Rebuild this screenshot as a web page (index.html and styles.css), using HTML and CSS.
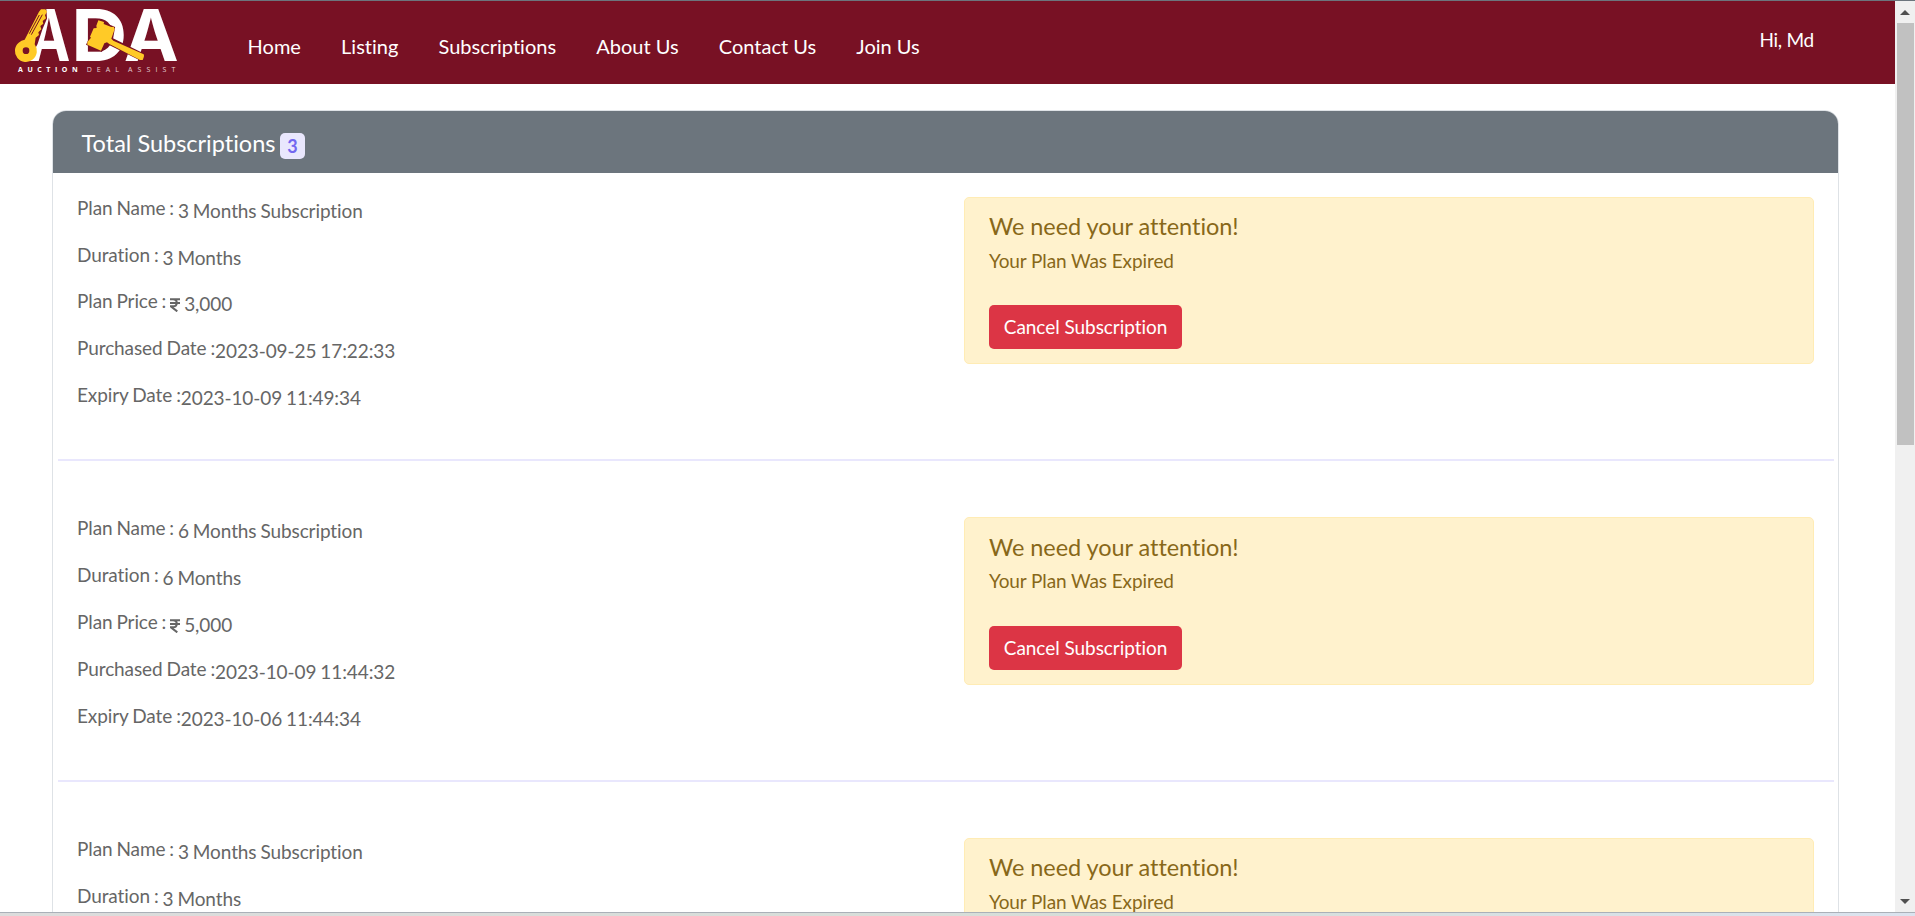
FILE: index.html
```
<!DOCTYPE html>
<html lang="en">
<head>
<meta charset="utf-8">
<title>Subscriptions</title>
<link rel="stylesheet" href="styles.css">
</head>
<body>
<div class="window">
  <div class="page">
    <header class="navbar">
      <svg class="logo" viewBox="0 3 540 249" role="img" aria-label="Auction Deal Assist">
        <g class="logo-letters">
          <text x="84" y="183" textLength="127" lengthAdjust="spacingAndGlyphs">A</text>
          <text x="214" y="183" textLength="168" lengthAdjust="spacingAndGlyphs">D</text>
          <text x="371" y="183" textLength="165" lengthAdjust="spacingAndGlyphs">A</text>
        </g>
        <path class="knockout" d="M76 120 L122 27 L136 27 L138 55 L124 88 L110 131 L78 190 L40 150Z"/>
        <path class="knockout" d="M295 63 L342 83 L336 117 L432 164 L424 180 L324 130 L304 152 L262 133Z"/>
        <g class="gold">
          <path fill-rule="evenodd" d="M74 119 L117 35 L123 28 L136 28 L141 35 L135 46 L138 55 L128 63 L130 71 L121 78 L124 88 L115 97 L117 105 L107 113 L104 133 A33 33 0 1 1 56 128 Q64 120 74 119Z M78 142 A10 10 0 1 0 78 162 A10 10 0 1 0 78 142Z"/>
          <path d="M295 61 L312 66 L311 72 L334 81 L341 80 L344 87 L334 116 L340 122 L431 163 Q434 168 428 180 L420 180 L328 132 L321 127 L313 130 L303 152 L262 134 L262 126 L273 113 L270 110 L281 85 L290 84 L289 77Z"/>
        </g>
        <path class="slot" d="M127 44 L94 104 M118 45 L88 101"/>
        <g class="tagline">
          <text class="tagline-strong" x="54" y="215" textLength="179">AUCTION</text>
          <text x="260" y="215" textLength="97">DEAL</text>
          <text x="384" y="215" textLength="142">ASSIST</text>
        </g>
      </svg>
      <nav class="links">
        <a>Home</a><a>Listing</a><a>Subscriptions</a><a>About Us</a><a>Contact Us</a><a>Join Us</a>
      </nav>
      <span class="greeting">Hi, Md</span>
    </header>
    <main class="card">
      <div class="card-header"><h1>Total Subscriptions</h1><span class="badge">3</span></div>
      <section class="plan">
        <dl class="details">
          <div><dt>Plan Name :</dt><dd class="spaced">3 Months Subscription</dd></div>
          <div><dt>Duration :</dt><dd class="spaced">3 Months</dd></div>
          <div><dt>Plan Price :</dt><dd class="spaced"><svg class="rupee" viewBox="0 0 10 14"><path d="M0 1.2H10M0 5H10M0 1.2H3C8 1.2 8 8.3 3 8.3H.8L7.3 13.4"/></svg>3,000</dd></div>
          <div><dt>Purchased Date :</dt><dd>2023-09-25 17:22:33</dd></div>
          <div><dt>Expiry Date :</dt><dd>2023-10-09 11:49:34</dd></div>
        </dl>
        <div class="alert"><h2>We need your attention!</h2><p>Your Plan Was Expired</p><button>Cancel Subscription</button></div>
      </section>
      <section class="plan">
        <dl class="details">
          <div><dt>Plan Name :</dt><dd class="spaced">6 Months Subscription</dd></div>
          <div><dt>Duration :</dt><dd class="spaced">6 Months</dd></div>
          <div><dt>Plan Price :</dt><dd class="spaced"><svg class="rupee" viewBox="0 0 10 14"><path d="M0 1.2H10M0 5H10M0 1.2H3C8 1.2 8 8.3 3 8.3H.8L7.3 13.4"/></svg>5,000</dd></div>
          <div><dt>Purchased Date :</dt><dd>2023-10-09 11:44:32</dd></div>
          <div><dt>Expiry Date :</dt><dd>2023-10-06 11:44:34</dd></div>
        </dl>
        <div class="alert tall"><h2>We need your attention!</h2><p>Your Plan Was Expired</p><button>Cancel Subscription</button></div>
      </section>
      <section class="plan">
        <dl class="details">
          <div><dt>Plan Name :</dt><dd class="spaced">3 Months Subscription</dd></div>
          <div><dt>Duration :</dt><dd class="spaced">3 Months</dd></div>
        </dl>
        <div class="alert"><h2>We need your attention!</h2><p>Your Plan Was Expired</p></div>
      </section>
    </main>
  </div>
  <div class="scrollbar"><i class="arrow-up"></i><i class="thumb"></i><i class="arrow-down"></i></div>
</div>
<div class="taskbar"></div>
</body>
</html>
```
FILE: styles.css
```
* { box-sizing: border-box; }
body { margin: 0; height: 916px; overflow: hidden; background: #fff; color: #666; font: 19px/28px Lato, sans-serif; font-variant-ligatures: none; display: flex; flex-direction: column; border-top: 1px solid #6c757d; }
h1, h2, p, dl, dd { margin: 0; font-weight: 400; }
.window { flex: 1; min-height: 0; display: flex; overflow: hidden; }
.page { flex: 1; overflow: hidden; }
.navbar { height: 83px; background: #781124; color: #fff; display: flex; align-items: flex-start; }
.logo { width: 180px; height: 83px; overflow: visible; }
.logo-letters { fill: #fff; font: 700 214px Inter, sans-serif; }
.knockout { fill: #781124; stroke: #781124; stroke-width: 6; }
.gold { fill: #ffca27; }
.slot { fill: none; stroke: #781124; stroke-width: 3; }
.tagline { fill: #e4cdd1; font: 400 21px "Open Sans", sans-serif; }
.tagline-strong { fill: #fff; font-weight: 700; }
.links { display: flex; gap: 40.2px; padding: 31px 0 0 67.6px; font-size: 20px; }
.greeting { margin: 25px 81px 0 auto; letter-spacing: -.25px; }
.card { margin: 26px 56px 0 52px; border: 1px solid #dee2e6; border-radius: 14px 14px 0 0; overflow: hidden; height: 1000px; }
.card-header { height: 62px; background: #6c757d; color: #fff; display: flex; align-items: flex-start; padding: 16px 0 0 28.6px; gap: 5px; }
h1 { font-size: 23.5px; line-height: 32px; width: 193.4px; white-space: nowrap; }
.badge { margin-top: 6px; width: 25px; height: 26px; border-radius: 5px; background: #e9e7fd; color: #7367f0; font-size: 18px; font-weight: 700; line-height: 26px; text-align: center; }
.plan { margin: 0 4px 0 5px; height: 321px; display: grid; grid-template-columns: 1fr 850px; padding: 56px 20px 0 19px; border-top: 2px solid #e9e7fd; }
.plan:first-of-type { padding-top: 24px; border-top: 0; height: 286px; }
.details { display: flex; flex-direction: column; gap: 18.9px; margin-top: -3px; letter-spacing: -.1px; word-spacing: -.8px; }
.plan:first-of-type .details { gap: 18.7px; }
.details div { display: flex; height: 28px; white-space: nowrap; }
.details dd { padding-top: 3px; }
.spaced { margin-left: 4px; }
.rupee { width: 10px; height: 14px; margin-right: 4px; vertical-align: -1px; fill: none; stroke: #666; stroke-width: 2; }
.alert { height: 167px; border: 1px solid #ffecb5; border-radius: 5px; background: #fff2cd; color: #886819; padding: 12px 24px; }
.alert h2 { font-size: 23.5px; line-height: 32px; letter-spacing: -.05px; }
.alert p { line-height: 28px; margin-top: 5px; letter-spacing: -.1px; }
.alert button { display: block; margin-top: 30px; width: 193px; height: 44px; padding: 0; border: 0; border-radius: 5px; background: #dc3545; color: #fff; font: 19px/44px Lato, sans-serif; font-variant-ligatures: none; letter-spacing: -.05px; }
.alert.tall { height: 168px; padding-top: 13px; }
.tall p { margin-top: 4px; }
.tall button { margin-top: 31px; }
.scrollbar { width: 20px; background: #f0f0f0; display: flex; flex-direction: column; align-items: center; }
.arrow-up, .arrow-down { border: 5px solid transparent; height: 0; }
.arrow-up { border-bottom-color: #505050; border-top: 0; margin: 9px 0 8px; }
.thumb { width: 17px; height: 422px; background: #c1c1c1; }
.arrow-down { border-top-color: #505050; border-bottom: 0; margin: auto 0 8px; }
.taskbar { height: 4px; border-top: 1px solid #aab0b8; background: linear-gradient(90deg, #dcdcdc, #d6ded8 60%, #dbe3ef); }
```
